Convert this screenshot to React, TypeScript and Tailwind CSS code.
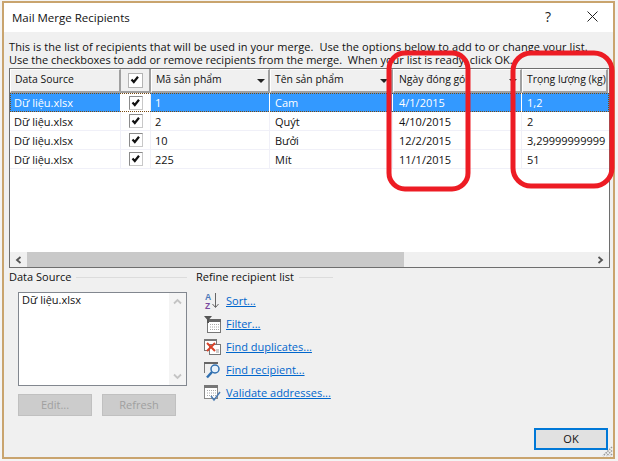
const font = { fontFamily: '"Open Sans", "Noto Sans", sans-serif' };

const cols = [111, 30, 119, 123, 129, 86];
const rows = [
  ["1", "Cam", "4/1/2015", "1,2"],
  ["2", "Quýt", "4/10/2015", "2"],
  ["10", "Bưởi", "12/2/2015", "3,29999999999"],
  ["225", "Mít", "11/1/2015", "51"],
];

function Check({ size = 14, light }: { size?: number; light?: boolean }) {
  return (
    <div className={`flex items-center justify-center bg-white border ${light ? "border-[#b4b4b4]" : "border-[#8a8a8a] border-r-[#c8c8c8] border-b-[#c8c8c8]"}`} style={{ width: size, height: size }}>
      <svg width="10" height="10" viewBox="0 0 10 10">
        <path d="M1.500 4.500 L3.800 7 L8 1.800" fill="none" stroke="#111" strokeWidth="2.200" />
      </svg>
    </div>
  );
}

function HeaderCell({ w, children, arrow, pad }: { w: number; children?: React.ReactNode; arrow?: boolean; pad: string }) {
  return (
    <div className={`relative flex h-[24px] shrink-0 items-start overflow-hidden border-r-2 border-b-2 border-[#a0a0a0] border-l border-l-white border-t border-t-white pt-[2px] text-[10.4px] text-[#111] ${pad}`} style={{ width: w }}>
      <span className="whitespace-nowrap">{children}</span>
      {arrow && <span className="absolute right-[3px] top-[9px] h-0 w-0 border-x-[4.5px] border-t-[4px] border-x-transparent border-t-[#222]" />}
    </div>
  );
}

function Row({ r, selected }: { r: string[]; selected?: boolean }) {
  const cell = selected ? "border-r border-white text-white" : "border-r border-[#f0f0f8] text-[#111]";
  return (
    <div className={`flex h-[19px] ${selected ? "bg-[#3399ff] outline-1 -outline-offset-1 outline-dotted outline-[#7a4a10]" : "border-b border-[#f0f0f8]"}`}>
      <div className={`${cell} shrink-0 pl-[4px] leading-[19px]`} style={{ width: cols[0] }}>Dữ liệu.xlsx</div>
      <div className="flex shrink-0 items-center justify-center border-r border-[#f0f0f8] bg-white" style={{ width: cols[1] }}><Check /></div>
      <div className={`${cell} shrink-0 pl-[4px] leading-[19px]`} style={{ width: cols[2] }}>{r[0]}</div>
      <div className={`${cell} shrink-0 pl-[5px] leading-[19px]`} style={{ width: cols[3] }}>{r[1]}</div>
      <div className={`${cell} shrink-0 pl-[6px] leading-[19px]`} style={{ width: cols[4] }}>{r[2]}</div>
      <div className={`${selected ? "text-white" : "text-[#111]"} shrink-0 overflow-hidden whitespace-nowrap pl-[5px] leading-[19px]`} style={{ width: cols[5] }}>{r[3]}</div>
    </div>
  );
}

function Legend({ title, lineW }: { title: string; lineW: number }) {
  return (
    <div className="flex h-[16px] items-center gap-[5px] text-[#111]">
      <span className="whitespace-nowrap">{title}</span>
      <span className="h-px bg-[#dcdcdc]" style={{ width: lineW }} />
    </div>
  );
}

function LinkRow({ icon, label }: { icon: React.ReactNode; label: string }) {
  return (
    <div className="flex h-[23px] items-center gap-[5px]">
      <div className="flex h-[18px] w-[17px] items-center justify-center">{icon}</div>
      <a className="whitespace-nowrap text-[#0066cc] underline">{label}</a>
    </div>
  );
}

const SortIcon = (
  <svg width="17" height="18" viewBox="0 0 17 18">
    <text x="1" y="8" fontSize="8.500" fontWeight="700" fill="#4a78b8" fontFamily="Liberation Sans">A</text>
    <text x="1" y="17" fontSize="8.500" fontWeight="700" fill="#7a4a9e" fontFamily="Liberation Sans">Z</text>
    <path d="M11.500 1 V15 M8.500 12 L11.500 15.500 L14.500 12" fill="none" stroke="#666" strokeWidth="1" />
  </svg>
);
const FilterIcon = (
  <svg width="17" height="18" viewBox="0 0 17 18">
    <rect x="3.500" y="4.500" width="13" height="13" fill="#fff" stroke="#777" />
    <rect x="3" y="4" width="14" height="3" fill="#666" />
    <path d="M6 9.500h9M6 12h9M6 14.500h9" stroke="#aaa" strokeDasharray="1 1" />
    <path d="M0 1h8L5 4.500V8H3V4.500Z" fill="#555" />
  </svg>
);
const DupIcon = (
  <svg width="17" height="18" viewBox="0 0 17 18">
    <rect x="0.500" y="1.500" width="12" height="11" fill="#fff" stroke="#777" />
    <rect x="5.500" y="6.500" width="11" height="10" fill="#fff" stroke="#777" />
    <rect x="0" y="1" width="13" height="2" fill="#777" />
    <path d="M3 5 L11 13 M11 5 L3 13" stroke="#d8432a" strokeWidth="2" />
    <path d="M12 12h3M12 14h3" stroke="#999" />
  </svg>
);
const FindIcon = (
  <svg width="17" height="18" viewBox="0 0 17 18">
    <path d="M0.500 12V1.500H13" fill="none" stroke="#777" />
    <rect x="0" y="1" width="14" height="2" fill="#666" />
    <circle cx="11" cy="8" r="4" fill="#e8f2fb" stroke="#2f6fb0" strokeWidth="1.500" />
    <path d="M8 11 L3 16.500" stroke="#2f6fb0" strokeWidth="2.500" />
  </svg>
);
const ValidateIcon = (
  <svg width="17" height="18" viewBox="0 0 17 18">
    <rect x="0.500" y="1.500" width="13" height="13" fill="#fff" stroke="#888" />
    <rect x="0" y="1" width="14" height="3" fill="#777" />
    <path d="M3 6.500h9M3 9h9M3 11.500h9" stroke="#aaa" strokeDasharray="1 1" />
    <path d="M7 12 L10 16 L16 8" fill="none" stroke="#4a7ab0" strokeWidth="1.500" />
  </svg>
);

export default function App() {
  return (
    <div className="relative h-[461px] w-[618px] overflow-hidden bg-[#f4f4f4] pl-[2px] pt-[1px] text-[11px] leading-[14px]" style={font}>
      <div className="relative flex h-[458px] w-[613px] flex-col border-2 border-[#c9a46e] bg-[#f0f0f0]">
        <div className="flex h-[29px] shrink-0 items-center justify-between bg-white pl-[8px] pr-[15px]">
          <span className="text-[11.500px] text-[#111]">Mail Merge Recipients</span>
          <div className="-mt-[2px] flex items-center gap-[36px]">
            <span className="text-[14px] text-[#222]">?</span>
            <svg width="11" height="11" viewBox="0 0 11 11"><path d="M0.500 0.500 L10.500 10.500 M10.500 0.500 L0.500 10.500" stroke="#222" fill="none" /></svg>
          </div>
        </div>

        <div className="flex min-h-0 flex-1 flex-col px-[5px]">
          <div className="mt-[8px] whitespace-pre leading-[13px] text-[#111]">
            <div className="tracking-[0.08px]">This is the list of recipients that will be used in your merge.  Use the options below to add to or change your list.</div>
            <div>Use the checkboxes to add or remove recipients from the merge.  When your list is ready, click OK.</div>
          </div>

          <div className="mt-[2px] flex h-[200px] w-[601px] shrink-0 flex-col border border-[#6e6e6e] bg-white">
            <div className="flex shrink-0 bg-[#f0f0f0]">
              <HeaderCell w={cols[0]} pad="pl-[4px]">Data Source</HeaderCell>
              <div className="flex h-[24px] shrink-0 items-center justify-center border-r-2 border-b-2 border-[#a0a0a0]" style={{ width: cols[1] }}><Check size={15} light /></div>
              <HeaderCell w={cols[2]} arrow pad="pl-[4px]">Mã sản phẩm</HeaderCell>
              <HeaderCell w={cols[3]} arrow pad="pl-[4px]">Tên sản phẩm</HeaderCell>
              <HeaderCell w={cols[4]} arrow pad="pl-[5px]">Ngày đóng gói</HeaderCell>
              <HeaderCell w={cols[5]} pad="pl-[4px]">Trọng lượng (kg)</HeaderCell>
            </div>
            <div className="min-h-0 flex-1">
              {rows.map((r, i) => <Row key={i} r={r} selected={i === 0} />)}
            </div>
            <div className="flex h-[15px] shrink-0 items-center bg-[#f0f0f0]">
              <div className="flex h-full w-[17px] shrink-0 items-center justify-center">
                <svg width="7" height="8" viewBox="0 0 7 8"><path d="M5.500 1 L2 4 L5.500 7" fill="none" stroke="#555" strokeWidth="1.800" /></svg>
              </div>
              <div className="h-full w-[377px] shrink-0 bg-[#c9c9c9]" />
              <div className="flex-1" />
              <div className="flex h-full w-[17px] shrink-0 items-center justify-center">
                <svg width="7" height="8" viewBox="0 0 7 8"><path d="M1.500 1 L5 4 L1.500 7" fill="none" stroke="#555" strokeWidth="1.800" /></svg>
              </div>
            </div>
          </div>

          <div className="mt-[1px] flex">
            <div className="flex w-[187px] shrink-0 flex-col">
              <Legend title="Data Source" lineW={111} />
              <div className="ml-[9px] mt-[7px] flex h-[94px] w-[169px] border border-[#82878f] bg-white">
                <div className="flex-1 pl-[3px] text-[#111]">Dữ liệu.xlsx</div>
                <div className="flex w-[17px] flex-col items-center justify-between bg-[#f4f4f4] py-[5px]">
                  <svg width="9" height="7" viewBox="0 0 9 7"><path d="M1 5.500 L4.500 2 L8 5.500" fill="none" stroke="#c4c4c4" strokeWidth="1.800" /></svg>
                  <svg width="9" height="7" viewBox="0 0 9 7"><path d="M1 1.500 L4.500 5 L8 1.500" fill="none" stroke="#c4c4c4" strokeWidth="1.800" /></svg>
                </div>
              </div>
              <div className="ml-[9px] mt-[8px] flex gap-[10px]">
                <button className="h-[22px] w-[74px] border border-[#c0c0c0] bg-[#cccccc] text-[#a0a0a0]">Edit...</button>
                <button className="h-[22px] w-[74px] border border-[#c0c0c0] bg-[#cccccc] text-[#a0a0a0]">Refresh</button>
              </div>
            </div>
            <div className="flex flex-col">
              <Legend title="Refine recipient list" lineW={34} />
              <div className="ml-[8px] mt-[4px] flex flex-col">
                <LinkRow icon={SortIcon} label="Sort..." />
                <LinkRow icon={FilterIcon} label="Filter..." />
                <LinkRow icon={DupIcon} label="Find duplicates..." />
                <LinkRow icon={FindIcon} label="Find recipient..." />
                <LinkRow icon={ValidateIcon} label="Validate addresses..." />
              </div>
            </div>
          </div>

          <div className="mb-[7px] mt-auto flex justify-end">
            <button className="h-[22px] w-[74px] border-2 border-[#0078d7] bg-[#e1e1e1] text-[11px] text-[#111]">OK</button>
          </div>
        </div>
        <svg className="absolute bottom-0 right-0" width="12" height="12" viewBox="0 0 12 12">
          <path d="M11 2 L2 11 M11 5.500 L5.500 11 M11 9 L9 11" stroke="#9a9a9a" strokeWidth="1.500" strokeDasharray="1.500 1" />
        </svg>
      </div>

      <svg className="pointer-events-none absolute left-0 top-0" width="618" height="461" viewBox="0 0 618 461">
        <rect x="389" y="53" width="79" height="136" rx="16" fill="none" stroke="#ed1c24" strokeWidth="5" />
        <rect x="513" y="53" width="99" height="133" rx="18" fill="none" stroke="#ed1c24" strokeWidth="5" />
      </svg>
    </div>
  );
}
